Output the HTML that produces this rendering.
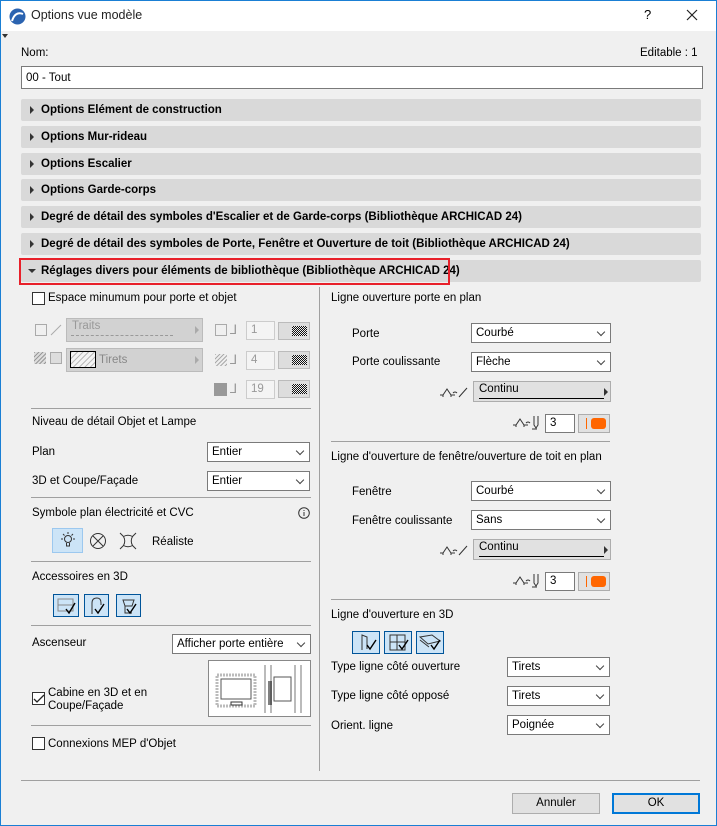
<!DOCTYPE html>
<html><head><meta charset="utf-8">
<style>
*{box-sizing:border-box;margin:0;padding:0}
body{width:717px;height:826px;background:#f0f0f0;font-family:"Liberation Sans",sans-serif;font-size:11.5px;color:#000;position:relative;overflow:hidden}
.win{position:absolute;left:0;top:0;width:717px;height:826px;border:1px solid #1a7fd4}
.a{position:absolute;white-space:nowrap}
.title{position:absolute;left:1px;top:1px;width:715px;height:30px;background:#fff}
.bar{position:absolute;left:21px;width:680px;height:22px;background:#d9d9d9;border-radius:2px;font-weight:bold;font-size:11.5px;line-height:23px;padding-left:20px}
.bar:before{content:"";position:absolute;left:9px;top:7px;border-left:4px solid #333;border-top:4px solid transparent;border-bottom:4px solid transparent}
.bar.open:before{left:7px;top:9px;border-top:4px solid #333;border-left:4px solid transparent;border-right:4px solid transparent;border-bottom:0}
.hr{position:absolute;height:1px;background:#a0a0a0}
.dd{position:absolute;height:20px;background:#fff;border:1px solid #7a7a7a;line-height:18px;padding-left:4px}
.dd:after{content:"";position:absolute;right:6px;top:5px;width:5px;height:5px;border-right:1px solid #444;border-bottom:1px solid #444;transform:rotate(45deg)}
.cb{position:absolute;width:13px;height:13px;border:1px solid #333;background:#fff}
.fld{position:absolute;height:19px;background:#fff;border:1px solid #7a7a7a;line-height:17px;padding-left:4px}
.cont{position:absolute;height:21px;background:#e1e1e1;border:1px solid #adadad;padding-left:5px;line-height:15px}
.cont:before{content:"";position:absolute;left:5px;right:6px;top:16px;height:1px;background:#000}
.cont:after{content:"";position:absolute;right:2px;top:6px;border-left:4px solid #333;border-top:4px solid transparent;border-bottom:4px solid transparent}
.org{position:absolute;width:32px;height:19px;background:#e1e1e1;border:1px solid #adadad}
.org i{position:absolute;left:7px;top:3px;width:1px;height:11px;background:#f60}
.org b{position:absolute;left:12px;top:3px;width:15px;height:11px;background:#f60;border-radius:3px}
.ib{position:absolute;width:25px;height:23px;background:#cce4f7;border:1px solid #005499}
.btn{position:absolute;height:21px;background:#e1e1e1;border:1px solid #adadad;text-align:center;line-height:19px}
.gray{color:#999}
</style></head><body>
<div class="win"></div>
<div class="title"></div>
<svg class="a" style="left:9px;top:8px" width="17" height="17" viewBox="0 0 17 17"><circle cx="8.5" cy="8.5" r="8" fill="#2b63b0"/><path d="M3 13 Q6 3 14 6" stroke="#fff" stroke-width="2" fill="none"/></svg>
<div class="a" style="left:31px;top:8px;font-size:12.5px;color:#222">Options vue modèle</div>
<div class="a" style="left:644px;top:7px;font-size:13px">?</div>
<svg class="a" style="left:686px;top:9px" width="12" height="12"><path d="M1 1L11 11M11 1L1 11" stroke="#222" stroke-width="1.2"/></svg>
<div class="a" style="left:2px;top:34px;border-top:4px solid #333;border-left:3px solid transparent;border-right:3px solid transparent"></div>

<div class="a" style="left:21px;top:47px">Nom:</div>
<div class="a" style="left:640px;top:47px">Editable : 1</div>
<div class="a" style="left:21px;top:66px;width:682px;height:23px;background:#fff;border:1px solid #7a7a7a;padding-left:4px;line-height:22px">00 - Tout</div>

<div class="bar" style="top:99px">Options Elément de construction</div>
<div class="bar" style="top:126px">Options Mur-rideau</div>
<div class="bar" style="top:153px">Options Escalier</div>
<div class="bar" style="top:179px">Options Garde-corps</div>
<div class="bar" style="top:206px">Degré de détail des symboles d'Escalier et de Garde-corps (Bibliothèque ARCHICAD 24)</div>
<div class="bar" style="top:233px">Degré de détail des symboles de Porte, Fenêtre et Ouverture de toit (Bibliothèque ARCHICAD 24)</div>
<div class="bar open" style="top:260px">Réglages divers pour éléments de bibliothèque (Bibliothèque ARCHICAD 24)</div>
<div class="a" style="left:19px;top:258px;width:431px;height:27px;border:2px solid #e8202a"></div>

<div class="cb" style="left:32px;top:292px"></div>
<div class="a" style="left:48px;top:292px">Espace minumum pour porte et objet</div>

<div class="a" style="left:35px;top:324px;width:12px;height:12px;border:1px solid #aaa"></div>
<svg class="a" style="left:50px;top:324px" width="12" height="12"><path d="M1 11L11 1" stroke="#aaa"/></svg>
<div class="a" style="left:66px;top:318px;width:137px;height:24px;background:#d2d2d2;border:1px solid #bbb;color:#999;padding-left:5px;line-height:14px">Traits</div>
<div class="a" style="left:71px;top:335px;width:102px;border-top:1px dashed #999"></div>
<div class="a" style="left:195px;top:326px;border-left:4px solid #aaa;border-top:4px solid transparent;border-bottom:4px solid transparent"></div>

<div class="a" style="left:34px;top:352px;width:12px;height:12px;background:repeating-linear-gradient(135deg,#999 0 1px,#ddd 1px 3px)"></div>
<div class="a" style="left:50px;top:352px;width:12px;height:12px;border:1px solid #aaa;background:#ddd"></div>
<div class="a" style="left:66px;top:348px;width:137px;height:24px;background:#d2d2d2;border:1px solid #bbb;color:#888;line-height:22px;padding-left:32px">Tirets</div>
<div class="a" style="left:70px;top:351px;width:26px;height:17px;border:1px solid #000;background:repeating-linear-gradient(135deg,#bbb 0 1px,#f4f4f4 1px 4px)"></div>
<div class="a" style="left:195px;top:356px;border-left:4px solid #aaa;border-top:4px solid transparent;border-bottom:4px solid transparent"></div>

<div class="a" style="left:215px;top:324px;width:12px;height:12px;border:1px solid #aaa"></div>
<div class="a" style="left:215px;top:354px;width:12px;height:12px;background:repeating-linear-gradient(135deg,#aaa 0 1px,#eee 1px 3px)"></div>
<div class="a" style="left:214px;top:383px;width:13px;height:13px;background:#999"></div>
<div class="a gray" style="left:230px;top:322px;font-size:13px">⅃</div>
<div class="a gray" style="left:230px;top:352px;font-size:13px">⅃</div>
<div class="a gray" style="left:230px;top:381px;font-size:13px">⅃</div>
<div class="fld gray" style="left:246px;top:321px;width:29px;background:#f4f4f4;border-color:#ccc">1</div>
<div class="fld gray" style="left:246px;top:351px;width:29px;background:#f4f4f4;border-color:#ccc">4</div>
<div class="fld gray" style="left:246px;top:380px;width:29px;background:#f4f4f4;border-color:#ccc">19</div>
<div class="a" style="left:278px;top:322px;width:32px;height:18px;background:#ddd;border:1px solid #bbb"><div style="position:absolute;left:13px;top:3px;width:15px;height:10px;background:repeating-conic-gradient(#111 0 25%,#eee 0 50%) 0 0/2px 2px"></div></div>
<div class="a" style="left:278px;top:351px;width:32px;height:18px;background:#ddd;border:1px solid #bbb"><div style="position:absolute;left:13px;top:3px;width:15px;height:10px;background:repeating-conic-gradient(#111 0 25%,#eee 0 50%) 0 0/2px 2px"></div></div>
<div class="a" style="left:278px;top:380px;width:32px;height:18px;background:#ddd;border:1px solid #bbb"><div style="position:absolute;left:13px;top:3px;width:15px;height:10px;background:repeating-conic-gradient(#111 0 25%,#eee 0 50%) 0 0/2px 2px"></div></div>
<div class="hr" style="left:31px;top:408px;width:280px"></div>

<div class="a" style="left:32px;top:416px">Niveau de détail Objet et Lampe</div>
<div class="a" style="left:32px;top:446px">Plan</div>
<div class="dd" style="left:207px;top:442px;width:103px">Entier</div>
<div class="a" style="left:32px;top:475px">3D et Coupe/Façade</div>
<div class="dd" style="left:207px;top:471px;width:103px">Entier</div>
<div class="hr" style="left:31px;top:497px;width:280px"></div>

<div class="a" style="left:32px;top:507px">Symbole plan électricité et CVC</div>
<svg class="a" style="left:298px;top:507px" width="12" height="12"><circle cx="6" cy="6" r="5.3" fill="none" stroke="#333"/><path d="M6 5v4M6 3v1" stroke="#333"/></svg>
<div class="a" style="left:52px;top:528px;width:31px;height:25px;background:#cce4f7;border:1px solid #9cc8ef"></div>
<svg class="a" style="left:58px;top:531px" width="20" height="18" viewBox="0 0 20 18"><circle cx="10" cy="8" r="3.5" fill="none" stroke="#333"/><path d="M8.5 12v3h3v-3M10 1v2M3 8h2M15 8h2M5 3l1.5 1.5M15 3l-1.5 1.5" stroke="#333" fill="none"/></svg>
<svg class="a" style="left:89px;top:532px" width="18" height="18"><circle cx="9" cy="9" r="7.5" fill="none" stroke="#333"/><path d="M4 4L14 14M14 4L4 14" stroke="#333"/></svg>
<svg class="a" style="left:119px;top:532px" width="18" height="18"><path d="M1 1L4.5 4.5M17 1L13.5 4.5M1 17L4.5 13.5M17 17L13.5 13.5" stroke="#333"/><path d="M4.5 4.5Q9 2 13.5 4.5Q11 9 13.5 13.5Q9 16 4.5 13.5Q7 9 4.5 4.5" fill="none" stroke="#333"/></svg>
<div class="a" style="left:152px;top:536px">Réaliste</div>
<div class="hr" style="left:31px;top:561px;width:280px"></div>

<div class="a" style="left:32px;top:571px">Accessoires en 3D</div>
<div class="ib" style="left:53px;top:594px;width:26px"><svg width="24" height="21"><rect x="4" y="4" width="15" height="6" fill="none" stroke="#888"/><rect x="4" y="10" width="15" height="6" fill="none" stroke="#888"/><path d="M12 14l3 4 6-10" stroke="#000" stroke-width="1.4" fill="none"/></svg></div>
<div class="ib" style="left:84px;top:594px"><svg width="23" height="21"><path d="M7 19V8Q7 3 12 3Q16 3 16 8V10" stroke="#333" fill="none"/><path d="M10 14l3 4 6-9" stroke="#000" stroke-width="1.4" fill="none"/></svg></div>
<div class="ib" style="left:116px;top:594px"><svg width="23" height="21"><path d="M6 5h11l-2 6H8z M8 11v7h7" stroke="#333" fill="none"/><path d="M10 14l3 4 6-9" stroke="#000" stroke-width="1.4" fill="none"/></svg></div>
<div class="hr" style="left:31px;top:625px;width:280px"></div>

<div class="a" style="left:32px;top:637px">Ascenseur</div>
<div class="dd" style="left:172px;top:634px;width:139px">Afficher porte entière</div>
<div class="a" style="left:208px;top:660px;width:103px;height:57px;background:#fff;border:1px solid #888">
<svg width="101" height="55"><rect x="8" y="14" width="38" height="31" fill="none" stroke="#bbb" stroke-width="3" stroke-dasharray="2 1"/><rect x="12" y="18" width="30" height="20" fill="none" stroke="#555"/><rect x="22" y="41" width="11" height="3" fill="none" stroke="#333"/><path d="M56 4V52M62 4V52M86 4V52M92 4V52" stroke="#bbb" stroke-width="2"/><rect x="65" y="16" width="17" height="24" fill="none" stroke="#555"/><path d="M60 20V44M62 20V44" stroke="#000"/></svg></div>
<div class="cb" style="left:32px;top:692px"></div>
<svg class="a" style="left:33px;top:694px" width="12" height="10"><path d="M1 5l3 3 7-7" stroke="#222" stroke-width="1.3" fill="none"/></svg>
<div class="a" style="left:48px;top:687px;line-height:13px">Cabine en 3D et en<br>Coupe/Façade</div>
<div class="hr" style="left:31px;top:725px;width:280px"></div>
<div class="cb" style="left:32px;top:737px"></div>
<div class="a" style="left:48px;top:738px">Connexions MEP d'Objet</div>

<div class="a" style="left:319px;top:287px;width:1px;height:484px;background:#a0a0a0"></div>

<div class="a" style="left:331px;top:292px">Ligne ouverture porte en plan</div>
<div class="a" style="left:352px;top:328px">Porte</div>
<div class="dd" style="left:471px;top:323px;width:140px">Courbé</div>
<div class="a" style="left:352px;top:356px">Porte coulissante</div>
<div class="dd" style="left:471px;top:352px;width:140px">Flèche</div>
<svg class="a" style="left:439px;top:385px" width="30" height="14"><path d="M1 10h3l4-6 4 6h4M4 10v2M12 10v2" stroke="#333" fill="none"/><path d="M14 8q2-2 4 0" stroke="#333" fill="none"/><path d="M20 12L28 3" stroke="#333"/></svg>
<div class="cont" style="left:473px;top:381px;width:138px">Continu</div>
<svg class="a" style="left:512px;top:415px" width="32" height="16"><path d="M1 10h3l4-6 4 6h4M4 10v2M12 10v2" stroke="#333" fill="none"/><path d="M14 8q2-2 4 0" stroke="#333" fill="none"/><path d="M22 1v9l2 3 2-3V1M20 14h5" stroke="#333" fill="none"/></svg>
<div class="fld" style="left:545px;top:414px;width:30px">3</div>
<div class="org" style="left:578px;top:414px"><i></i><b></b></div>
<div class="hr" style="left:331px;top:441px;width:279px"></div>

<div class="a" style="left:331px;top:451px">Ligne d'ouverture de fenêtre/ouverture de toit en plan</div>
<div class="a" style="left:352px;top:486px">Fenêtre</div>
<div class="dd" style="left:471px;top:481px;width:140px">Courbé</div>
<div class="a" style="left:352px;top:515px">Fenêtre coulissante</div>
<div class="dd" style="left:471px;top:510px;width:140px">Sans</div>
<svg class="a" style="left:439px;top:543px" width="30" height="14"><path d="M1 10h3l4-6 4 6h4M4 10v2M12 10v2" stroke="#333" fill="none"/><path d="M14 8q2-2 4 0" stroke="#333" fill="none"/><path d="M20 12L28 3" stroke="#333"/></svg>
<div class="cont" style="left:473px;top:539px;width:138px">Continu</div>
<svg class="a" style="left:512px;top:573px" width="32" height="16"><path d="M1 10h3l4-6 4 6h4M4 10v2M12 10v2" stroke="#333" fill="none"/><path d="M14 8q2-2 4 0" stroke="#333" fill="none"/><path d="M22 1v9l2 3 2-3V1M20 14h5" stroke="#333" fill="none"/></svg>
<div class="fld" style="left:545px;top:572px;width:30px">3</div>
<div class="org" style="left:578px;top:572px"><i></i><b></b></div>
<div class="hr" style="left:331px;top:599px;width:279px"></div>

<div class="a" style="left:331px;top:609px">Ligne d'ouverture en 3D</div>
<div class="ib" style="left:352px;top:631px;width:28px"><svg width="26" height="21"><path d="M9 18V3l5 2v12" stroke="#333" fill="none"/><path d="M14 13l3 4 6-9" stroke="#000" stroke-width="1.4" fill="none"/></svg></div>
<div class="ib" style="left:384px;top:631px;width:28px"><svg width="26" height="21"><rect x="5" y="3" width="15" height="15" fill="none" stroke="#333"/><path d="M12 3v15M5 10h15" stroke="#333"/><path d="M14 13l3 4 6-9" stroke="#000" stroke-width="1.4" fill="none"/></svg></div>
<div class="ib" style="left:416px;top:631px;width:28px"><svg width="26" height="21"><path d="M3 5l12-2 8 6-12 3z M3 8l9 7" stroke="#333" fill="none"/><path d="M14 13l3 4 6-9" stroke="#000" stroke-width="1.4" fill="none"/></svg></div>
<div class="a" style="left:331px;top:661px">Type ligne côté ouverture</div>
<div class="dd" style="left:507px;top:657px;width:103px">Tirets</div>
<div class="a" style="left:331px;top:690px">Type ligne côté opposé</div>
<div class="dd" style="left:507px;top:686px;width:103px">Tirets</div>
<div class="a" style="left:331px;top:720px">Orient. ligne</div>
<div class="dd" style="left:507px;top:715px;width:103px">Poignée</div>

<div class="hr" style="left:21px;top:780px;width:679px"></div>
<div class="btn" style="left:512px;top:793px;width:88px">Annuler</div>
<div class="btn" style="left:612px;top:793px;width:88px;border:2px solid #0078d7;line-height:17px">OK</div>
</body></html>
